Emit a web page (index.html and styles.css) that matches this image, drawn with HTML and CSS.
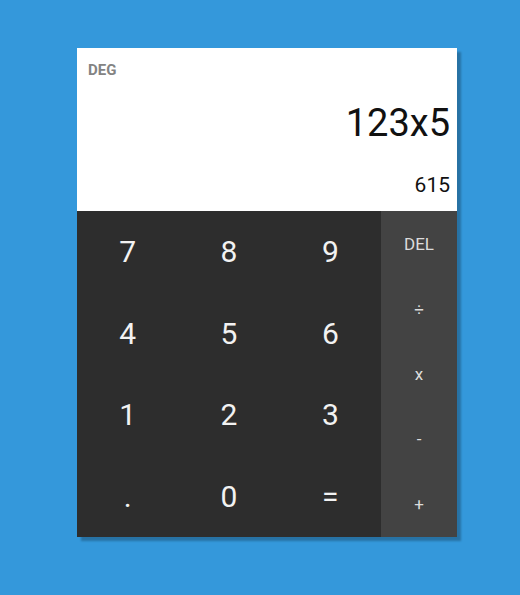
FILE: index.html
```html
<!DOCTYPE html>
<html>
<head>
<meta charset="utf-8">
<link rel="stylesheet" href="styles.css">
</head>
<body>
<div class="calc">
  <div class="display">
    <div class="mode">DEG</div>
    <div class="expr">123x5</div>
    <div class="result">615</div>
  </div>
  <div class="pad">
    <div class="digits">
      <button class="key">7</button>
      <button class="key">8</button>
      <button class="key">9</button>
      <button class="key">4</button>
      <button class="key">5</button>
      <button class="key">6</button>
      <button class="key">1</button>
      <button class="key">2</button>
      <button class="key">3</button>
      <button class="key">.</button>
      <button class="key">0</button>
      <button class="key">=</button>
    </div>
    <div class="ops">
      <button class="op">DEL</button>
      <button class="op">÷</button>
      <button class="op">x</button>
      <button class="op">-</button>
      <button class="op">+</button>
    </div>
  </div>
</div>
</body>
</html>
```
FILE: styles.css
```css
html, body {
  margin: 0;
  padding: 0;
}
body {
  background: #3498db;
  font-family: Roboto, "Liberation Sans", sans-serif;
  width: 520px;
  height: 595px;
  overflow: hidden;
}
.calc {
  margin: 48px 0 0 77px;
  width: 380px;
  box-shadow: 4px 4px 2px rgba(0, 0, 0, 0.25);
}
.display {
  background: #ffffff;
  height: 163px;
  box-sizing: border-box;
  padding: 14px 7px 0 11px;
  display: flex;
  flex-direction: column;
}
.mode {
  font-size: 15px;
  font-weight: 700;
  color: #838383;
  line-height: 16px;
}
.expr {
  margin-top: 23px;
  font-size: 38px;
  line-height: 44px;
  text-align: right;
  color: #111;
}
.result {
  margin-top: 28px;
  font-size: 21px;
  line-height: 24px;
  text-align: right;
  color: #111;
}
.pad {
  display: flex;
  height: 326px;
}
.digits {
  flex: 1;
  background: #2d2d2d;
  display: grid;
  grid-template-columns: repeat(3, 1fr);
  grid-template-rows: repeat(4, 1fr);
}
.ops {
  width: 76px;
  background: #434343;
  display: flex;
  flex-direction: column;
}
.key, .op {
  border: none;
  background: transparent;
  margin: 0;
  padding: 0;
  font-family: Roboto, "Liberation Sans", sans-serif;
  display: flex;
  align-items: center;
  justify-content: center;
}
.key {
  color: #f2f2f2;
  font-size: 30px;
}
.op {
  flex: 1;
  color: #dcdcdc;
  font-size: 17px;
}
```
